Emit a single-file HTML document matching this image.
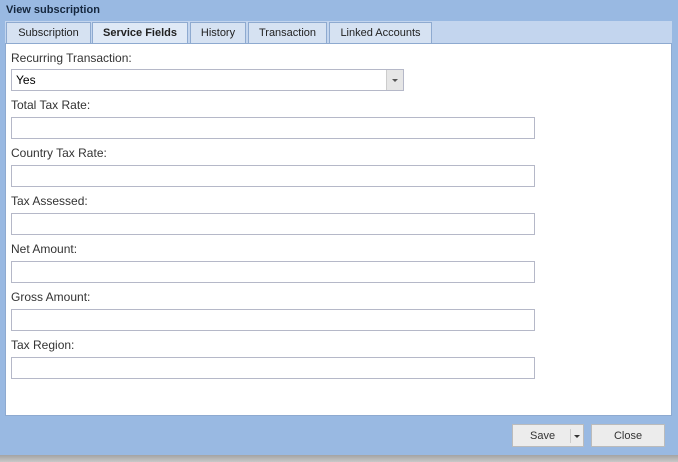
<!DOCTYPE html><html><head><style>
body{margin:0;width:678px;height:462px;background:#99b9e2;font-family:"Liberation Sans",sans-serif;font-size:12px;position:relative;overflow:hidden}
.t{position:absolute;left:6px;top:4px;font-weight:bold;font-size:11px;color:#15273e}
.strip{position:absolute;left:5px;top:21px;width:667px;height:22px;background:#c3d5ee}
.tab{position:absolute;top:22px;height:20px;border:1px solid #8eaad0;border-bottom:none;background:#d6e2f2;font-size:11px;color:#222;text-align:center;line-height:20px}
.tab.a{background:#dfe9f6;font-weight:bold;height:21px}
.panel{position:absolute;left:5px;top:43px;width:665px;height:371px;background:#fff;border:1px solid #8eaad0}
.l{position:absolute;left:11px;color:#333}
.i{position:absolute;left:11px;width:522px;height:20px;border:1px solid #b5b8c8;background:#fff}
.sel{position:absolute;left:11px;top:69px;width:391px;height:20px;border:1px solid #b5b8c8;background:#fff;line-height:20px}
.sel span{margin-left:4px;color:#000}
.arr{position:absolute;right:0;top:0;width:16px;height:20px;background:#e6e6e6;border-left:1px solid #ccc}
.arr:after{content:"";position:absolute;left:5px;top:9px;border-left:3px solid transparent;border-right:3px solid transparent;border-top:3px solid #555}
.b{position:absolute;top:424px;height:21px;border:1px solid #bbb;background:#ececec;color:#333;text-align:center;line-height:23px;font-size:11px}
.sh{position:absolute;left:0;top:455px;width:678px;height:7px;background:linear-gradient(#a3a3a3,#c8c8c8)}
</style></head><body>
<div class="t">View subscription</div>
<div class="strip"></div>
<div class="tab" style="left:6px;width:83px">Subscription</div>
<div class="tab a" style="left:92px;width:94px">Service Fields</div>
<div class="tab" style="left:190px;width:54px">History</div>
<div class="tab" style="left:248px;width:77px">Transaction</div>
<div class="tab" style="left:329px;width:101px">Linked Accounts</div>
<div class="panel"></div>
<div class="l" style="top:51px">Recurring Transaction:</div>
<div class="sel"><span>Yes</span><div class="arr"></div></div>
<div class="l" style="top:98px">Total Tax Rate:</div><div class="i" style="top:117px"></div>
<div class="l" style="top:146px">Country Tax Rate:</div><div class="i" style="top:165px"></div>
<div class="l" style="top:194px">Tax Assessed:</div><div class="i" style="top:213px"></div>
<div class="l" style="top:242px">Net Amount:</div><div class="i" style="top:261px"></div>
<div class="l" style="top:290px">Gross Amount:</div><div class="i" style="top:309px"></div>
<div class="l" style="top:338px">Tax Region:</div><div class="i" style="top:357px"></div>
<div class="b" style="left:512px;width:70px"><span style="position:absolute;left:17px">Save</span><span style="position:absolute;left:57px;top:4px;height:14px;border-left:1px solid #ccc"></span><span style="position:absolute;left:61px;top:10px;border-left:3px solid transparent;border-right:3px solid transparent;border-top:3px solid #333"></span></div>
<div class="b" style="left:591px;width:72px">Close</div>
<div class="sh"></div>
</body></html>
